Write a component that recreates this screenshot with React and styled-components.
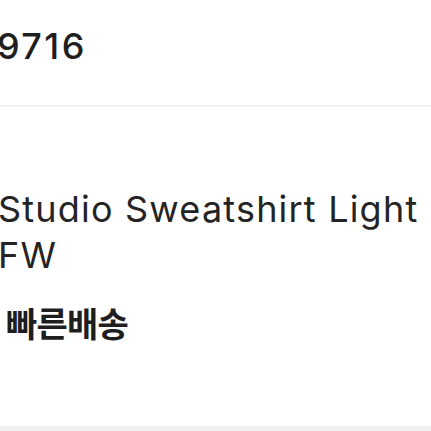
import React from "react";
import styled, { createGlobalStyle } from "styled-components";

const GlobalStyle = createGlobalStyle`
  html, body {
    margin: 0;
    padding: 0;
    background: #ffffff;
  }
  body {
    font-family: Inter, "Noto Sans", "Noto Sans CJK KR", sans-serif;
    color: #222222;
    overflow: hidden;
  }
`;

const Page = styled.div`
  width: 431px;
  height: 431px;
  display: flex;
  flex-direction: column;
  overflow: hidden;
`;

const PriceSection = styled.div`
  padding: 24px 0 0 0;
  height: 105px;
  box-sizing: border-box;
`;

const Price = styled.div`
  margin-left: -3px;
  font-size: 36px;
  line-height: 44px;
  font-weight: 500;
  letter-spacing: 2.4px;
  color: #1f1f1f;
`;

const Divider = styled.hr`
  margin: 0;
  border: 0;
  height: 2px;
  flex-shrink: 0;
  background: #f1f1f1;
`;

const InfoSection = styled.div`
  flex: 1;
  display: flex;
  flex-direction: column;
  padding-top: 79px;
`;

const Title = styled.h1`
  margin: 0 0 0 -2px;
  font-size: 36px;
  line-height: 46px;
  font-weight: 400;
  color: #242424;
  letter-spacing: 1.2px;
`;

const Badge = styled.span`
  align-self: flex-start;
  margin-top: 25px;
  padding: 0 6px;
  font-family: "Noto Sans CJK KR", sans-serif;
  font-size: 34px;
  line-height: 40px;
  font-weight: 700;
  letter-spacing: -0.8px;
  color: #1e1e1e;
`;

const Gap = styled.div`
  height: 5px;
  flex-shrink: 0;
  background: #efefef;
`;

export default function App() {
  return (
    <>
      <GlobalStyle />
      <Page>
        <PriceSection>
          <Price>9716</Price>
        </PriceSection>
        <Divider />
        <InfoSection>
          <Title>Studio Sweatshirt Light FW</Title>
          <Badge>빠른배송</Badge>
        </InfoSection>
        <Gap />
      </Page>
    </>
  );
}
